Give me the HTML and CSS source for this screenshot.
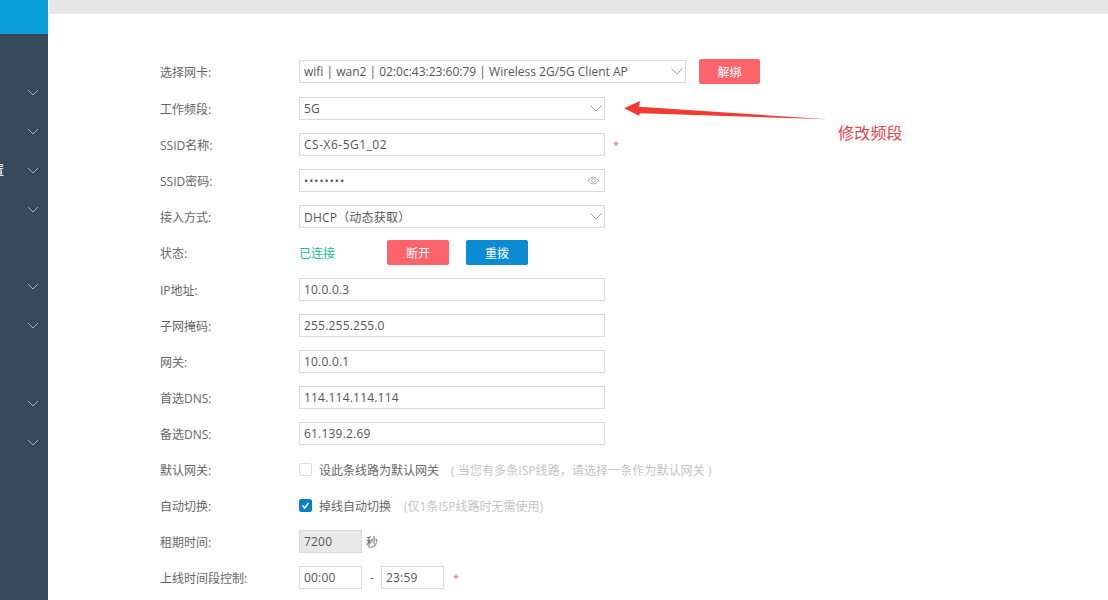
FILE: index.html
```html
<!DOCTYPE html>
<html lang="zh-CN">
<head>
<meta charset="utf-8">
<title>网卡设置</title>
<link rel="stylesheet" href="styles.css">
</head>
<body>
<div class="app">
  <aside class="sidebar">
    <div class="logo"></div>
    <nav class="nav">
      <div class="nav-item"><svg class="chev" viewBox="0 0 12 7"><path d="M1 1l5 5 5-5"/></svg></div>
      <div class="nav-item"><svg class="chev" viewBox="0 0 12 7"><path d="M1 1l5 5 5-5"/></svg></div>
      <div class="nav-item"><span class="nav-text">配置</span><svg class="chev" viewBox="0 0 12 7"><path d="M1 1l5 5 5-5"/></svg></div>
      <div class="nav-item"><svg class="chev" viewBox="0 0 12 7"><path d="M1 1l5 5 5-5"/></svg></div>
      <div class="nav-item"></div>
      <div class="nav-item"><svg class="chev" viewBox="0 0 12 7"><path d="M1 1l5 5 5-5"/></svg></div>
      <div class="nav-item"><svg class="chev" viewBox="0 0 12 7"><path d="M1 1l5 5 5-5"/></svg></div>
      <div class="nav-item"></div>
      <div class="nav-item"><svg class="chev" viewBox="0 0 12 7"><path d="M1 1l5 5 5-5"/></svg></div>
      <div class="nav-item"><svg class="chev" viewBox="0 0 12 7"><path d="M1 1l5 5 5-5"/></svg></div>
    </nav>
  </aside>
  <main class="main">
    <div class="topbar"></div>
    <form class="form">
      <div class="row first">
        <label class="label">选择网卡:</label>
        <div class="field select wide"><span>wifi | wan2 | 02:0c:43:23:60:79 | Wireless 2G/5G Client AP</span><svg class="caret" viewBox="0 0 12 7"><path d="M.5.5l5.5 5.5L11.500.5"/></svg></div>
        <button type="button" class="btn red unbind">解绑</button>
      </div>
      <div class="row">
        <label class="label">工作频段:</label>
        <div class="field select"><span>5G</span><svg class="caret" viewBox="0 0 12 7"><path d="M.5.5l5.5 5.5L11.500.5"/></svg></div>
      </div>
      <div class="row">
        <label class="label">SSID名称:</label>
        <div class="field ssid"><span>CS-X6-5G1_02</span></div>
        <span class="req">*</span>
      </div>
      <div class="row">
        <label class="label">SSID密码:</label>
        <div class="field select"><span class="dots">••••••••</span><svg class="eye" viewBox="0 0 12 9"><path d="M.5 4.500C2 2 4 .8 6 .8s4 1.200 5.500 3.700C10 7 8 8.200 6 8.200S2 7 .5 4.500z"/><circle cx="6" cy="4.500" r="2"/></svg></div>
      </div>
      <div class="row">
        <label class="label">接入方式:</label>
        <div class="field select"><span>DHCP（动态获取）</span><svg class="caret" viewBox="0 0 12 7"><path d="M.5.5l5.5 5.5L11.500.5"/></svg></div>
      </div>
      <div class="row status-row">
        <label class="label">状态:</label>
        <span class="connected">已连接</span>
        <button type="button" class="btn red">断开</button>
        <button type="button" class="btn blue">重拨</button>
      </div>
      <div class="row">
        <label class="label">IP地址:</label>
        <div class="field"><span>10.0.0.3</span></div>
      </div>
      <div class="row">
        <label class="label">子网掩码:</label>
        <div class="field"><span>255.255.255.0</span></div>
      </div>
      <div class="row">
        <label class="label">网关:</label>
        <div class="field"><span>10.0.0.1</span></div>
      </div>
      <div class="row">
        <label class="label">首选DNS:</label>
        <div class="field"><span>114.114.114.114</span></div>
      </div>
      <div class="row">
        <label class="label">备选DNS:</label>
        <div class="field"><span>61.139.2.69</span></div>
      </div>
      <div class="row">
        <label class="label">默认网关:</label>
        <span class="check"></span>
        <span class="check-text">设此条线路为默认网关</span>
        <span class="hint hint-a">( 当您有多条ISP线路，请选择一条作为默认网关 )</span>
      </div>
      <div class="row">
        <label class="label">自动切换:</label>
        <span class="check on"><svg viewBox="0 0 13 13"><path d="M3 6.500l2.500 3L10 3.500"/></svg></span>
        <span class="check-text">掉线自动切换</span>
        <span class="hint hint-b">(仅1条ISP线路时无需使用)</span>
      </div>
      <div class="row">
        <label class="label">租期时间:</label>
        <div class="field short disabled"><span>7200</span></div>
        <span class="unit">秒</span>
      </div>
      <div class="row">
        <label class="label">上线时间段控制:</label>
        <div class="field short"><span>00:00</span></div>
        <span class="dash">-</span>
        <div class="field short"><span>23:59</span></div>
        <span class="req req-time">*</span>
      </div>
    </form>
  </main>
</div>
<svg class="arrow" viewBox="0 0 210 24"><path d="M0 8.300L16 1 15 6.700 203 19.300 16 13.300 15 15.700z"/></svg>
<div class="note">修改频段</div>
</body>
</html>
```
FILE: styles.css
```css
* { box-sizing: border-box; }
html, body { margin: 0; height: 600px; overflow: hidden; background: #fff; }
body { font-family: "Open Sans", "Noto Sans CJK SC", sans-serif; font-size: 12px; color: #666; }
.app { display: flex; height: 600px; }
.sidebar { width: 48px; flex: none; background: #364a5c; overflow: hidden; }
.logo { height: 34px; background: #0a9fdb; }
.nav { padding-top: 39.500px; }
.nav-item { height: 38.800px; display: flex; align-items: center; justify-content: flex-end; padding-right: 9px; position: relative; }
.nav-text { margin-right: 16px; color: #fff; font-size: 12px; white-space: nowrap; flex: none; margin-left: -20px; }
.chev { width: 12px; height: 7px; margin-left: auto; }
.chev path { fill: none; stroke: #a9b4be; stroke-width: 1; }
.main { flex: 1; padding-left: 1px; }
.topbar { height: 14px; background: #e6e6e6; }
.form { padding: 46px 0 0 111px; }
.row { display: flex; align-items: center; height: 23px; margin-bottom: 13px; }
.row.first { margin-bottom: 14px; }
.label { width: 139px; flex: none; }
.field { width: 306px; height: 23px; flex: none; border: 1px solid #d9d9d9; padding: 0 3px 0 4px; display: flex; align-items: center; justify-content: space-between; color: #555; letter-spacing: .2px; }
.field.wide { width: 387px; letter-spacing: 0; }
.field.ssid { letter-spacing: .5px; }
.field.short { width: 63px; }
.field.disabled { background: #e8e8e8; }
.caret { width: 12px; height: 7px; margin-right: -1px; flex: none; }
.caret path { fill: none; stroke: #999; stroke-width: 1; }
.eye { width: 11px; height: 9px; margin-right: 2px; flex: none; }
.eye path, .eye circle { fill: none; stroke: #93a4aa; stroke-width: 1; }
.dots { font-size: 11px; letter-spacing: 1px; }
.req { color: #e8677d; font-size: 11px; margin-left: 8px; }
.req-time { margin-left: 9px; }
.btn { height: 25px; width: 62px; border: 0; border-radius: 2px; color: #fff; font: inherit; padding: 0; flex: none; }
.red { background: #fc636b; }
.blue { background: #0a8bd2; }
.unbind { margin-left: 13px; width: 61px; }
.status-row { height: 25px; margin-bottom: 13px; margin-top: -1px; }
.connected { color: #1abc9c; width: 88px; }
.status-row .blue { margin-left: 17px; }
.check { width: 13px; height: 13px; border: 1px solid #ddd; border-radius: 2px; flex: none; display: block; }
.check.on { background: #0a80c8; border-color: #0a80c8; }
.check svg { display: block; width: 11px; height: 11px; }
.check path { fill: none; stroke: #fff; stroke-width: 1.800; }
.check-text { margin-left: 7px; }
.hint { color: #c4c4c4; }
.hint-a { margin-left: 12px; letter-spacing: .08px; }
.hint-b { margin-left: 13px; }
.unit { margin-left: 4px; }
.dash { width: 19px; text-align: center; padding-left: 1px; }
.arrow { position: absolute; left: 624px; top: 100px; width: 210px; height: 24px; }
.arrow path { fill: #f03a36; }
.note { position: absolute; left: 838px; top: 122px; font-size: 16px; line-height: 22px; color: #e8434c; letter-spacing: .2px; }
```
